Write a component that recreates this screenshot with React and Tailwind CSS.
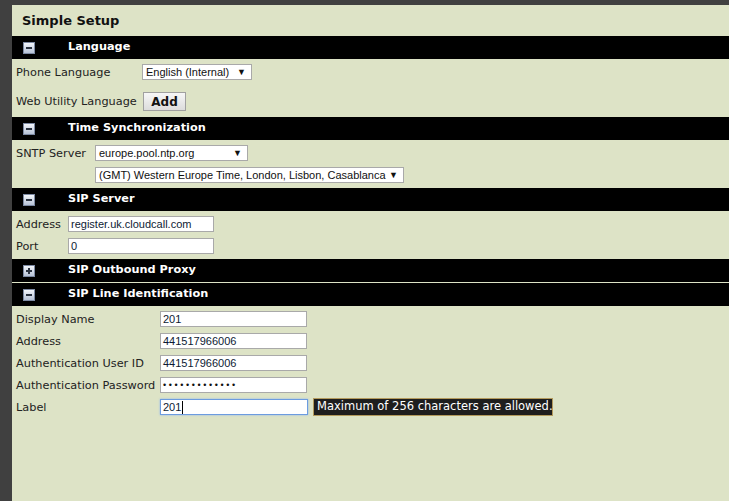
import React from 'react'

const verdana = { fontFamily: '"DejaVu Sans", Verdana, sans-serif' }
const arial = { fontFamily: '"Liberation Sans", Arial, sans-serif' }

function ToggleIcon({ open }) {
  return (
    <span className="w-[12px] h-[12px] border border-[#7d8aa3] bg-gradient-to-b from-[#f3f6fb] to-[#b7c2d6] flex items-center justify-center">
      <span className="relative w-[6px] h-[2px] bg-[#2b3340] flex items-center justify-center">
        {!open && <span className="absolute w-[2px] h-[6px] bg-[#2b3340]" />}
      </span>
    </span>
  )
}

function Header({ title, open = true, className = '' }) {
  return (
    <div className={`h-[23px] bg-black flex items-center ${className}`}>
      <div className="w-[56px] pl-[11px] flex items-center">
        <ToggleIcon open={open} />
      </div>
      <span className="text-white font-bold text-[11.3px]">{title}</span>
    </div>
  )
}

function Select({ value, width }) {
  return (
    <div
      className={`h-[16px] bg-white border border-[#a9a9a9] flex items-center justify-between pl-[3px] pr-[5px] text-[11px] leading-none text-[#111] whitespace-nowrap ${width}`}
      style={arial}
    >
      <span>{value}</span>
      <span className="text-[9px]">▼</span>
    </div>
  )
}

function Input({ value, width, focused, password }) {
  return (
    <div
      className={`h-[16px] bg-white flex items-center pl-[2px] text-[11px] leading-none text-[#0d1a33] ${width} ${focused ? 'border border-[#6c9ce0] shadow-[0_0_2px_#8fb5ee]' : 'border border-[#a9a9a9]'}`}
      style={arial}
    >
      {password ? <span className="tracking-[2.6px] text-[9px] text-[#111]">{'•'.repeat(13)}</span> : <span>{value}</span>}
      {focused && <span className="w-px h-[13px] bg-black ml-px" />}
    </div>
  )
}

function Row({ label, labelWidth, children, className = '' }) {
  return (
    <div className={`h-[16px] flex items-center ${className}`}>
      <span className={`text-[11.3px] leading-none pt-px text-[#222] whitespace-nowrap ${labelWidth}`}>{label}</span>
      {children}
    </div>
  )
}

export default function App() {
  return (
    <div className="w-[729px] h-[501px] bg-[#404040] pt-[5px] pl-[12px] flex overflow-hidden" style={verdana}>
      <div className="flex-1 bg-[#dde3c6] flex flex-col">
        <div className="h-[31px] shrink-0 flex items-center pl-[10px] text-[13px] font-bold text-[#111]">Simple Setup</div>

        <Header title="Language" />
        <div className="pl-[4px] pt-[5px] pb-[6px]">
          <Row label="Phone Language" labelWidth="w-[126px]">
            <Select value="English (Internal)" width="w-[110px]" />
          </Row>
          <div className="h-[19px] mt-[12px] flex items-center">
            <span className="text-[11.3px] leading-none pt-px text-[#222] w-[127px]">Web Utility Language</span>
            <button className="h-[19px] w-[43px] border border-[#a0a0a0] bg-gradient-to-b from-[#f7f7f7] to-[#dcdcdc] text-[12px] font-bold text-[#111] flex items-center justify-center">Add</button>
          </div>
        </div>

        <Header title="Time Synchronization" />
        <div className="pl-[4px] pt-[5px] pb-[5px]">
          <Row label="SNTP Server" labelWidth="w-[79px]">
            <Select value="europe.pool.ntp.org" width="w-[153px]" />
          </Row>
          <div className="pl-[79px] mt-[6px]">
            <Select value="(GMT) Western Europe Time, London, Lisbon, Casablanca" width="w-[309px]" />
          </div>
        </div>

        <Header title="SIP Server" />
        <div className="pl-[4px] pt-[5px] pb-[5px]">
          <Row label="Address" labelWidth="w-[52px]">
            <Input value="register.uk.cloudcall.com" width="w-[146px]" />
          </Row>
          <Row label="Port" labelWidth="w-[52px]" className="mt-[6px]">
            <Input value="0" width="w-[146px]" />
          </Row>
        </div>

        <Header title="SIP Outbound Proxy" open={false} />
        <Header title="SIP Line Identification" className="mt-px" />
        <div className="pl-[4px] pt-[5px] flex flex-col gap-[6px]">
          <Row label="Display Name" labelWidth="w-[144px]">
            <Input value="201" width="w-[147px]" />
          </Row>
          <Row label="Address" labelWidth="w-[144px]">
            <Input value="441517966006" width="w-[147px]" />
          </Row>
          <Row label="Authentication User ID" labelWidth="w-[144px]">
            <Input value="441517966006" width="w-[147px]" />
          </Row>
          <Row label="Authentication Password" labelWidth="w-[144px]">
            <Input password width="w-[147px]" />
          </Row>
          <Row label="Label" labelWidth="w-[144px]" className="relative">
            <Input value="201" width="w-[148px]" focused />
            <div className="absolute left-[297px] top-[-1px] h-[18px] w-[240px] bg-[#1e1e1e] border border-[#b39a5c] flex items-center pl-[3px] text-[11.5px] leading-none text-white whitespace-nowrap">
              Maximum of 256 characters are allowed.
            </div>
          </Row>
        </div>
      </div>
    </div>
  )
}
